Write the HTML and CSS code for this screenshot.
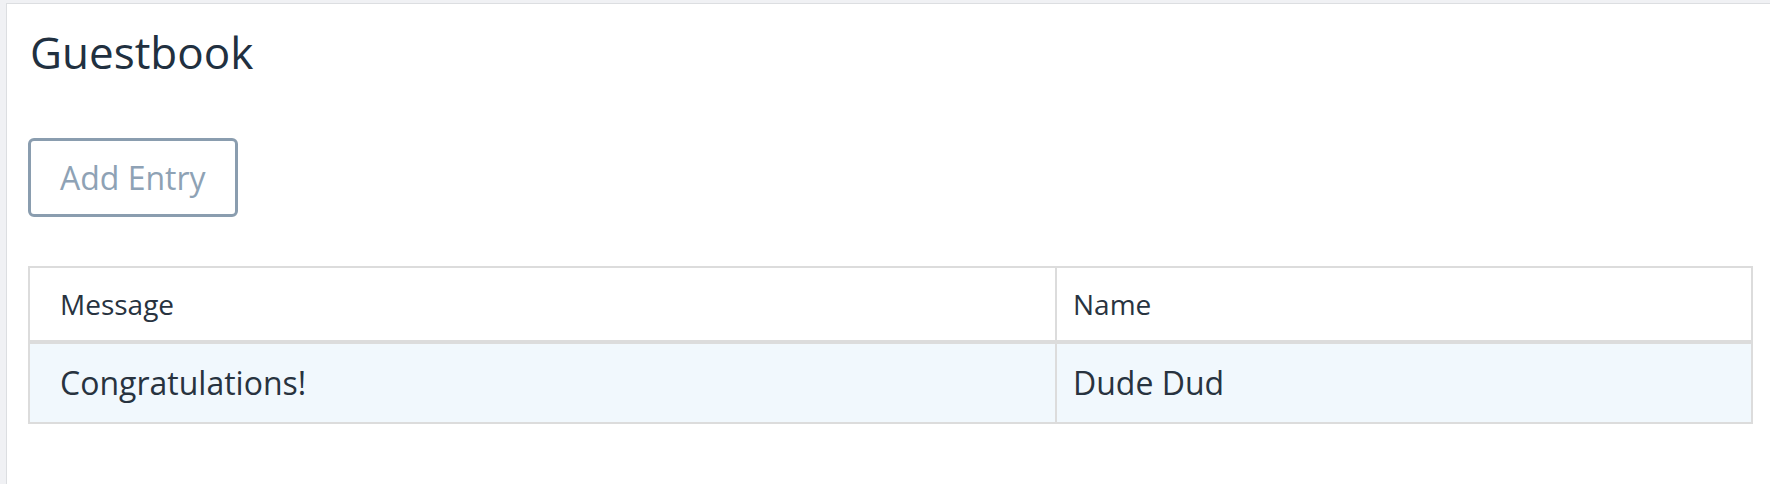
FILE: index.html
```html
<!DOCTYPE html>
<html lang="en">
<head>
<meta charset="utf-8">
<title>Guestbook</title>
<link rel="stylesheet" href="styles.css">
</head>
<body>
<main class="panel">
  <h1 class="title">Guestbook</h1>
  <button class="btn-outline" type="button">Add Entry</button>
  <table class="entries">
    <thead>
      <tr>
        <th class="col-message">Message</th>
        <th class="col-name">Name</th>
      </tr>
    </thead>
    <tbody>
      <tr class="row-highlight">
        <td class="col-message">Congratulations!</td>
        <td class="col-name">Dude Dud</td>
      </tr>
    </tbody>
  </table>
</main>
</body>
</html>
```

FILE: styles.css
```css
html, body {
  margin: 0;
  padding: 0;
  height: 100%;
}

body {
  background: #f0f1f4;
  font-family: "Open Sans", "Noto Sans", sans-serif;
  color: #27323f;
  overflow: hidden;
}

.panel {
  display: flex;
  flex-direction: column;
  align-items: flex-start;
  box-sizing: border-box;
  margin: 3px 0 0 6px;
  min-height: calc(100vh - 3px);
  background: #ffffff;
  border-top: 1px solid #dcdee1;
  border-left: 1px solid #dcdee1;
  padding: 22px 15px 0 21px;
}

.title {
  margin: 0 0 0 2px;
  font-size: 44px;
  line-height: 52px;
  font-weight: 400;
  color: #213040;
}

.btn-outline {
  margin-top: 60px;
  box-sizing: border-box;
  height: 79px;
  padding: 0 29px;
  background: #ffffff;
  border: 3px solid #8a9daf;
  border-radius: 6px;
  font-family: "Open Sans", "Noto Sans", sans-serif;
  font-size: 32px;
  line-height: 48px;
  color: #8ea2b5;
  cursor: pointer;
}

.entries {
  margin-top: 49px;
  width: 1725px;
  border-collapse: collapse;
  border: 2px solid #dcdcdc;
  table-layout: fixed;
}

.entries th,
.entries td {
  text-align: left;
  font-weight: 400;
  line-height: 1.5;
  padding: 0 16px;
  border-left: 2px solid #dcdcdc;
}

.entries th {
  font-size: 28px;
  height: 72px;
  color: #28333f;
  border-bottom: 4px solid #dcdcdc;
}

.entries td {
  font-size: 32px;
  height: 78px;
  color: #28333f;
}

.entries .col-message {
  width: 979px;
  padding-left: 30px;
}

.row-highlight {
  background: #f1f8fd;
}
```
